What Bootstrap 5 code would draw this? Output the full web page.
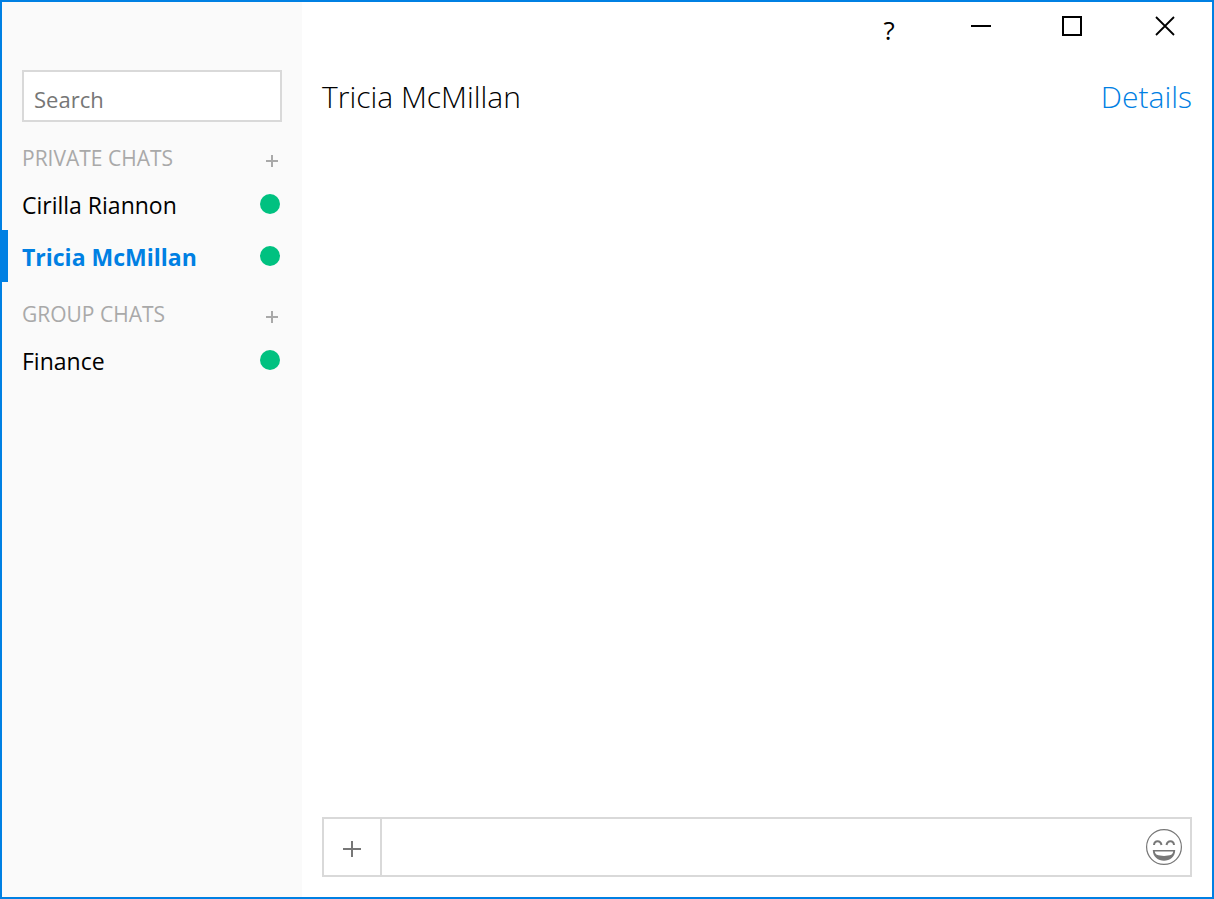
<!DOCTYPE html>
<html lang="en">
<head>
<meta charset="utf-8">
<meta name="viewport" content="width=device-width, initial-scale=1">
<title>Chat</title>
<link href="https://cdn.jsdelivr.net/npm/bootstrap@5.3.0/dist/css/bootstrap.min.css" rel="stylesheet">
<style>
  :root { --accent: #0080e3; --line: #d9d9d9; --muted: #a9a9a9; }
  body { font-family: "Open Sans", "Noto Sans", sans-serif; font-size: 23px; line-height: 32px; color: #000; }
  .chat-window { border: 2px solid var(--accent); }
  .sidebar { width: 300px; background: #fafafa; padding-top: 68px; }
  .search-wrap { padding: 0 20px 4px; }
  .search-box { height: 52px; border: 2px solid var(--line); border-radius: 0; padding: 6px 10px 0; font-size: 22px; }
  .search-box::placeholder { color: #767676; }
  .section-head { height: 52px; padding: 15px 22px 0 20px; color: var(--muted); }
  .section-head h2 { font-size: 21px; line-height: 34px; font-weight: 400; }
  .add-btn { width: 20px; height: 40px; color: var(--muted); }
  .chat-item { height: 52px; padding: 0 22px 0 20px; color: #000; }
  .chat-item.active { color: var(--accent); font-weight: 700; box-shadow: inset 6px 0 var(--accent); }
  .chat-name { padding-top: 2px; }
  .status-dot { width: 20px; height: 20px; background: #00c180; }
  .title-bar { padding-right: 1px; }
  .title-bar button { width: 92px; height: 48px; }
  .title-bar svg { display: block; }
  .help-btn { font-size: 26px; font-weight: 400; padding-top: 8px !important; }
  .chat-head { padding: 23px 20px 0; font-size: 30px; line-height: 48px; font-weight: 300; }
  .chat-head h1 { font-size: 30px; line-height: 48px; font-weight: 300; }
  .chat-head a { color: var(--accent); }
  .composer { height: 60px; margin: 0 20px 20px; border: 2px solid var(--line); }
  .attach-btn { width: 58px; border-right: 2px solid var(--line) !important; }
  .message-box { font-size: 22px; }
  .emoji-btn { width: 52px; }
</style>
</head>
<body>
<div class="chat-window d-flex vh-100">
  <aside class="sidebar flex-shrink-0">
    <div class="search-wrap">
      <input type="search" class="search-box form-control" placeholder="Search" aria-label="Search">
    </div>
    <div class="section-head d-flex justify-content-between">
      <h2 class="m-0">PRIVATE CHATS</h2>
      <button type="button" class="add-btn btn border-0 p-0 d-flex align-items-center justify-content-end" aria-label="New private chat">
        <svg width="16" height="16" viewBox="0 0 16 16"><path d="M2 8h12M8 2v12" stroke="currentColor" stroke-width="2" fill="none"/></svg>
      </button>
    </div>
    <nav aria-label="Private chats">
      <a href="#" class="chat-item d-flex align-items-center justify-content-between text-decoration-none"><span class="chat-name">Cirilla Riannon</span><span class="status-dot rounded-circle"></span></a>
      <a href="#" class="chat-item active d-flex align-items-center justify-content-between text-decoration-none" aria-current="page"><span class="chat-name">Tricia McMillan</span><span class="status-dot rounded-circle"></span></a>
    </nav>
    <div class="section-head d-flex justify-content-between">
      <h2 class="m-0">GROUP CHATS</h2>
      <button type="button" class="add-btn btn border-0 p-0 d-flex align-items-center justify-content-end" aria-label="New group chat">
        <svg width="16" height="16" viewBox="0 0 16 16"><path d="M2 8h12M8 2v12" stroke="currentColor" stroke-width="2" fill="none"/></svg>
      </button>
    </div>
    <nav aria-label="Group chats">
      <a href="#" class="chat-item d-flex align-items-center justify-content-between text-decoration-none"><span class="chat-name">Finance</span><span class="status-dot rounded-circle"></span></a>
    </nav>
  </aside>
  <main class="flex-grow-1 d-flex flex-column">
    <div class="title-bar d-flex justify-content-end">
      <button type="button" class="help-btn btn border-0 rounded-0 p-0 text-black" aria-label="Help">?</button>
      <button type="button" class="btn border-0 rounded-0 p-0 d-flex align-items-center justify-content-center" aria-label="Minimize"><svg width="22" height="22" viewBox="0 0 22 22"><path d="M1 11h20" stroke="#000" stroke-width="2"/></svg></button>
      <button type="button" class="btn border-0 rounded-0 p-0 d-flex align-items-center justify-content-center" aria-label="Maximize"><svg width="22" height="22" viewBox="0 0 22 22"><path d="M1 2h18v18H1z" stroke="#000" stroke-width="2" fill="none"/></svg></button>
      <button type="button" class="btn border-0 rounded-0 p-0 d-flex align-items-center justify-content-center" aria-label="Close"><svg width="22" height="22" viewBox="0 0 22 22"><path d="M2 2l18 18M20 2L2 20" stroke="#000" stroke-width="1.8"/></svg></button>
    </div>
    <header class="chat-head d-flex justify-content-between">
      <h1 class="m-0">Tricia McMillan</h1>
      <a href="#" class="text-decoration-none">Details</a>
    </header>
    <section class="flex-grow-1" aria-label="Messages"></section>
    <form class="composer d-flex">
      <button type="button" class="attach-btn btn border-0 rounded-0 p-0 d-flex align-items-center justify-content-center flex-shrink-0" aria-label="Attach"><svg width="20" height="20" viewBox="0 0 20 20"><path d="M1 12h18M10 4v16" stroke="#777" stroke-width="2"/></svg></button>
      <input type="text" class="message-box form-control border-0 rounded-0 h-100" aria-label="Message">
      <button type="button" class="emoji-btn btn border-0 rounded-0 p-0 d-flex align-items-center justify-content-center flex-shrink-0" aria-label="Emoji">
        <svg width="38" height="38" viewBox="0 0 38 38" fill="none" stroke="#777"><circle cx="19" cy="19" r="17.4" stroke-width="1.2"/><path d="M9 17c.5-5 6.500-5 7.500 0M21.500 17c1-5 7-5 7.500 0" stroke-width="2"/><path d="M7.800 22h22.400c0 14.200-22.400 14.200-22.400 0zM9.800 23.600c.3 1.800 1 2.600 2 3.200 4 1.500 10.400 1.500 14.400 0 1-.6 1.700-1.400 2-3.200z" fill="#777" fill-rule="evenodd" stroke="none"/></svg>
      </button>
    </form>
  </main>
</div>
<script src="https://cdn.jsdelivr.net/npm/bootstrap@5.3.0/dist/js/bootstrap.bundle.min.js"></script>
</body>
</html>
